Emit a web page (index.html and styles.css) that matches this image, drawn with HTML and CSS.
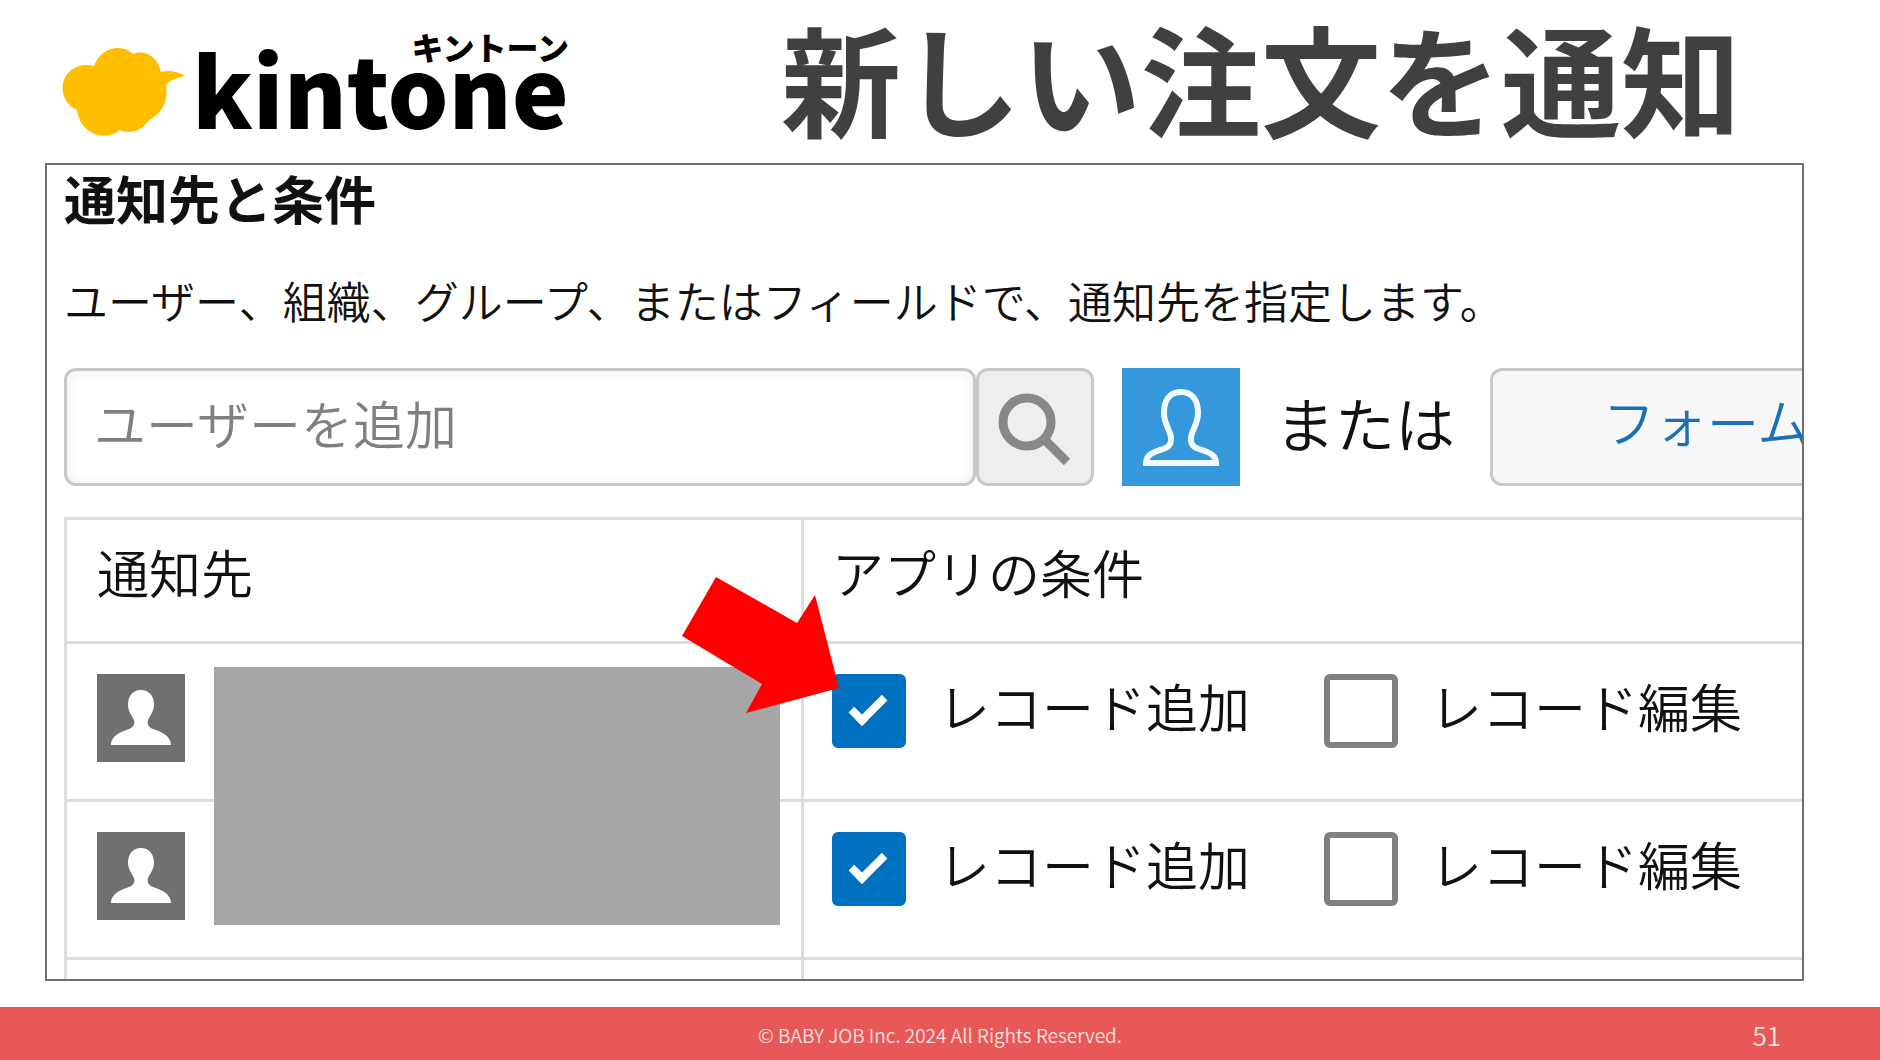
FILE: index.html
```html
<!DOCTYPE html>

<html lang="ja">
    <head>
        <meta charset="utf-8">
        <title>新しい注文を通知</title>

        <link rel="stylesheet" href="styles.css">
    </head>

    <body>
        <svg class="symbols" aria-hidden="true">
            <symbol id="person" viewBox="0 0 88 88">
                <path d="M44 16C35 16 31 23 31 31C31 37 35 42 37 46C38 50 37 53 32 55C23 58 14 62 14 71H74C74 62 65 58 56 55C51 53 50 50 51 46C53 42 57 37 57 31C57 23 53 16 44 16Z"/>
            </symbol>
        </svg>

        <header class="slide-header">
            <div class="logo">
                <svg class="cloud" viewBox="0 0 124 90" aria-hidden="true">
                    <path d="M32 18C37 5 47 0 56 0C62 0 67 2 71 6C85 1 96 10 99 24C107 22 115 23 123 28C116 30 109 31 104 37C107 54 99 66 87 72C79 84 68 86 58 82C42 95 18 85 15 62C4 57 -1 46 1 35C4 22 17 14 32 18Z"/>
                </svg>
                <div class="brand">
                    <span class="brand-name">kintone</span>
                    <span class="brand-kana">キントーン</span>
                </div>
            </div>
            <h1>新しい注文を通知</h1>
        </header>

        <main class="panel">
            <h2>通知先と条件</h2>
            <p class="description">ユーザー、組織、グループ、またはフィールドで、通知先を指定します。</p>

            <form class="picker">
                <input type="text" class="user-entry" placeholder="ユーザーを追加" aria-label="ユーザーを追加">
                <button type="button" class="search" aria-label="検索">
                    <svg viewBox="0 0 112 112">
                        <circle cx="48" cy="51" r="24"/>
                        <path d="M65 68L88 91"/>
                    </svg>
                </button>
                <button type="button" class="select-user" aria-label="ユーザーを選択">
                    <svg viewBox="0 0 118 118">
                        <path d="M59 24C47 24 42 33 42 45C42 56 48 62 49 69C50 78 45 80 38 82C29 85 24 88 24 95H94C94 88 89 85 80 82C73 80 68 78 69 69C70 62 76 56 76 45C76 33 71 24 59 24Z"/>
                    </svg>
                </button>
                <span class="or">または</span>
                <button type="button" class="form-field">フォームのフィールドを追加</button>
            </form>

            <div class="targets">
                <table>
                    <thead>
                        <tr>
                            <th class="target">通知先</th>
                            <th>アプリの条件</th>
                        </tr>
                    </thead>
                    <tbody>
                        <tr>
                            <td><svg class="avatar"><use href="#person"/></svg></td>
                            <td>
                                <div class="conditions">
                                    <label><input type="checkbox" checked>レコード追加</label>
                                    <label><input type="checkbox">レコード編集</label>
                                </div>
                            </td>
                        </tr>
                        <tr>
                            <td><svg class="avatar"><use href="#person"/></svg></td>
                            <td>
                                <div class="conditions">
                                    <label><input type="checkbox" checked>レコード追加</label>
                                    <label><input type="checkbox">レコード編集</label>
                                </div>
                            </td>
                        </tr>
                        <tr>
                            <td></td>
                            <td></td>
                        </tr>
                    </tbody>
                </table>
                <div class="mask"></div>
                <svg class="arrow" viewBox="0 0 157 136" aria-hidden="true">
                    <path d="M34 0L115 46L133 18L157 111L64 136L80 107L0 59Z"/>
                </svg>
            </div>
        </main>

        <footer class="slide-footer">
            <span class="copyright">© BABY JOB Inc. 2024 All Rights Reserved.</span>
            <span class="page-number">51</span>
        </footer>
    </body>
</html>
```
FILE: styles.css
```css
* {
    box-sizing: border-box;
}

body {
    margin: 0;
    height: 100vh;
    display: flex;
    flex-direction: column;
    overflow: hidden;
    background: white;
    color: #111;
    font-family: "Noto Sans CJK JP", sans-serif;
    font-size: 52px;
    font-weight: 350;
    line-height: 60px;
}

.symbols {
    display: none;
}

/* header */
.slide-header {
    flex: none;
    display: flex;
    justify-content: space-between;
    height: 163px;
    padding: 0 139px 0 62px;
}

.logo {
    display: flex;
    gap: 6px;
}

.cloud {
    width: 124px;
    height: 90px;
    margin-top: 48px;
    fill: #ffbf00;
}

.brand {
    position: relative;
    padding-top: 28px;
    color: black;
}

.brand-name {
    font-size: 96px;
    font-weight: 900;
    line-height: 120px;
}

.brand-kana {
    position: absolute;
    top: 26px;
    right: 0;
    font-size: 32px;
    font-weight: 900;
    line-height: 40px;
    white-space: nowrap;
}

h1 {
    margin: 0;
    padding-top: 5px;
    color: #404040;
    font-size: 120px;
    font-weight: 700;
    line-height: 144px;
    white-space: nowrap;
}

/* settings panel */
.panel {
    flex: 1;
    min-height: 0;
    margin: 0 76px 26px 45px;
    padding: 3px 0 0 17px;
    border: 2px solid #707070;
    overflow: hidden;
}

h2 {
    margin: 0;
    font-size: 52px;
    font-weight: 700;
    line-height: 60px;
}

.description {
    margin: 42px 0 38px;
    font-size: 44px;
    line-height: 60px;
    white-space: nowrap;
}

.picker {
    display: flex;
    align-items: center;
    white-space: nowrap;
}

.picker > * {
    flex: none;
    height: 118px;
    font: inherit;
}

.user-entry {
    width: 912px;
    padding: 0 27px 10px;
    border: 3px solid #c8c8c8;
    border-radius: 12px;
    background: white;
    box-shadow: inset 0 0 14px #eee;
}
.user-entry::placeholder {
    color: #808080;
    opacity: 1;
}

.search {
    width: 118px;
    padding: 0;
    border: 3px solid #c8c8c8;
    border-radius: 12px;
    background: #eee;
}
.search svg {
    display: block;
    fill: none;
    stroke: #888;
    stroke-width: 9;
}

.select-user {
    width: 118px;
    margin-left: 28px;
    padding: 0;
    border: none;
    background: #3498db;
}
.select-user svg {
    display: block;
    fill: none;
    stroke: #f0faff;
    stroke-width: 6;
}

.picker .or {
    margin: 0 35px;
    font-size: 60px;
    line-height: 108px;
}

.form-field {
    padding: 0 110px 12px;
    border: 3px solid #c8c8c8;
    border-radius: 12px;
    background: #f7f7f7;
    color: #1b6fb8;
}

/* table of targets */
.targets {
    position: relative;
    margin: 31px -20px 0 0;
}

table {
    width: 100%;
    table-layout: fixed;
    border-collapse: collapse;
}

th,
td {
    height: 158px;
    padding: 30px 28px 30px 30px;
    border: 3px solid #ddd;
    text-align: left;
    vertical-align: top;
}

th {
    height: 124px;
    padding-top: 22px;
    padding-bottom: 22px;
    font-weight: inherit;
}

th + th,
td + td {
    padding-left: 28px;
}

.target {
    width: 737px;
}

.avatar {
    display: block;
    width: 88px;
    height: 88px;
    background: #707070;
    fill: white;
}

.conditions {
    display: flex;
    gap: 74px;
    white-space: nowrap;
}

.conditions label {
    display: flex;
    gap: 32px;
    line-height: 64px;
}

input[type="checkbox"] {
    appearance: none;
    position: relative;
    width: 74px;
    height: 74px;
    margin: 0;
    border: 6px solid #808080;
    border-radius: 6px;
    background: white;
}
input[type="checkbox"]:checked {
    border-color: #0070c0;
    background: #0070c0;
}
input[type="checkbox"]:checked::after {
    content: "";
    position: absolute;
    top: 17px;
    left: 12px;
    box-sizing: border-box;
    width: 36px;
    height: 19px;
    border: solid white;
    border-width: 0 0 8px 8px;
    transform: rotate(-45deg);
}

.mask {
    position: absolute;
    top: 150px;
    left: 150px;
    width: 566px;
    height: 258px;
    background: #a6a6a6;
}

.arrow {
    position: absolute;
    top: 60px;
    left: 618px;
    width: 157px;
    height: 136px;
    fill: red;
}

/* footer */
.slide-footer {
    flex: none;
    display: grid;
    grid-template-columns: 1fr auto 1fr;
    align-items: center;
    height: 53px;
    padding: 2px 99px 0;
    background: #e85858;
    color: #ffe0dc;
    line-height: 30px;
}

.copyright {
    grid-column: 2;
    font-size: 19px;
}

.page-number {
    justify-self: end;
    font-size: 26px;
}
```
